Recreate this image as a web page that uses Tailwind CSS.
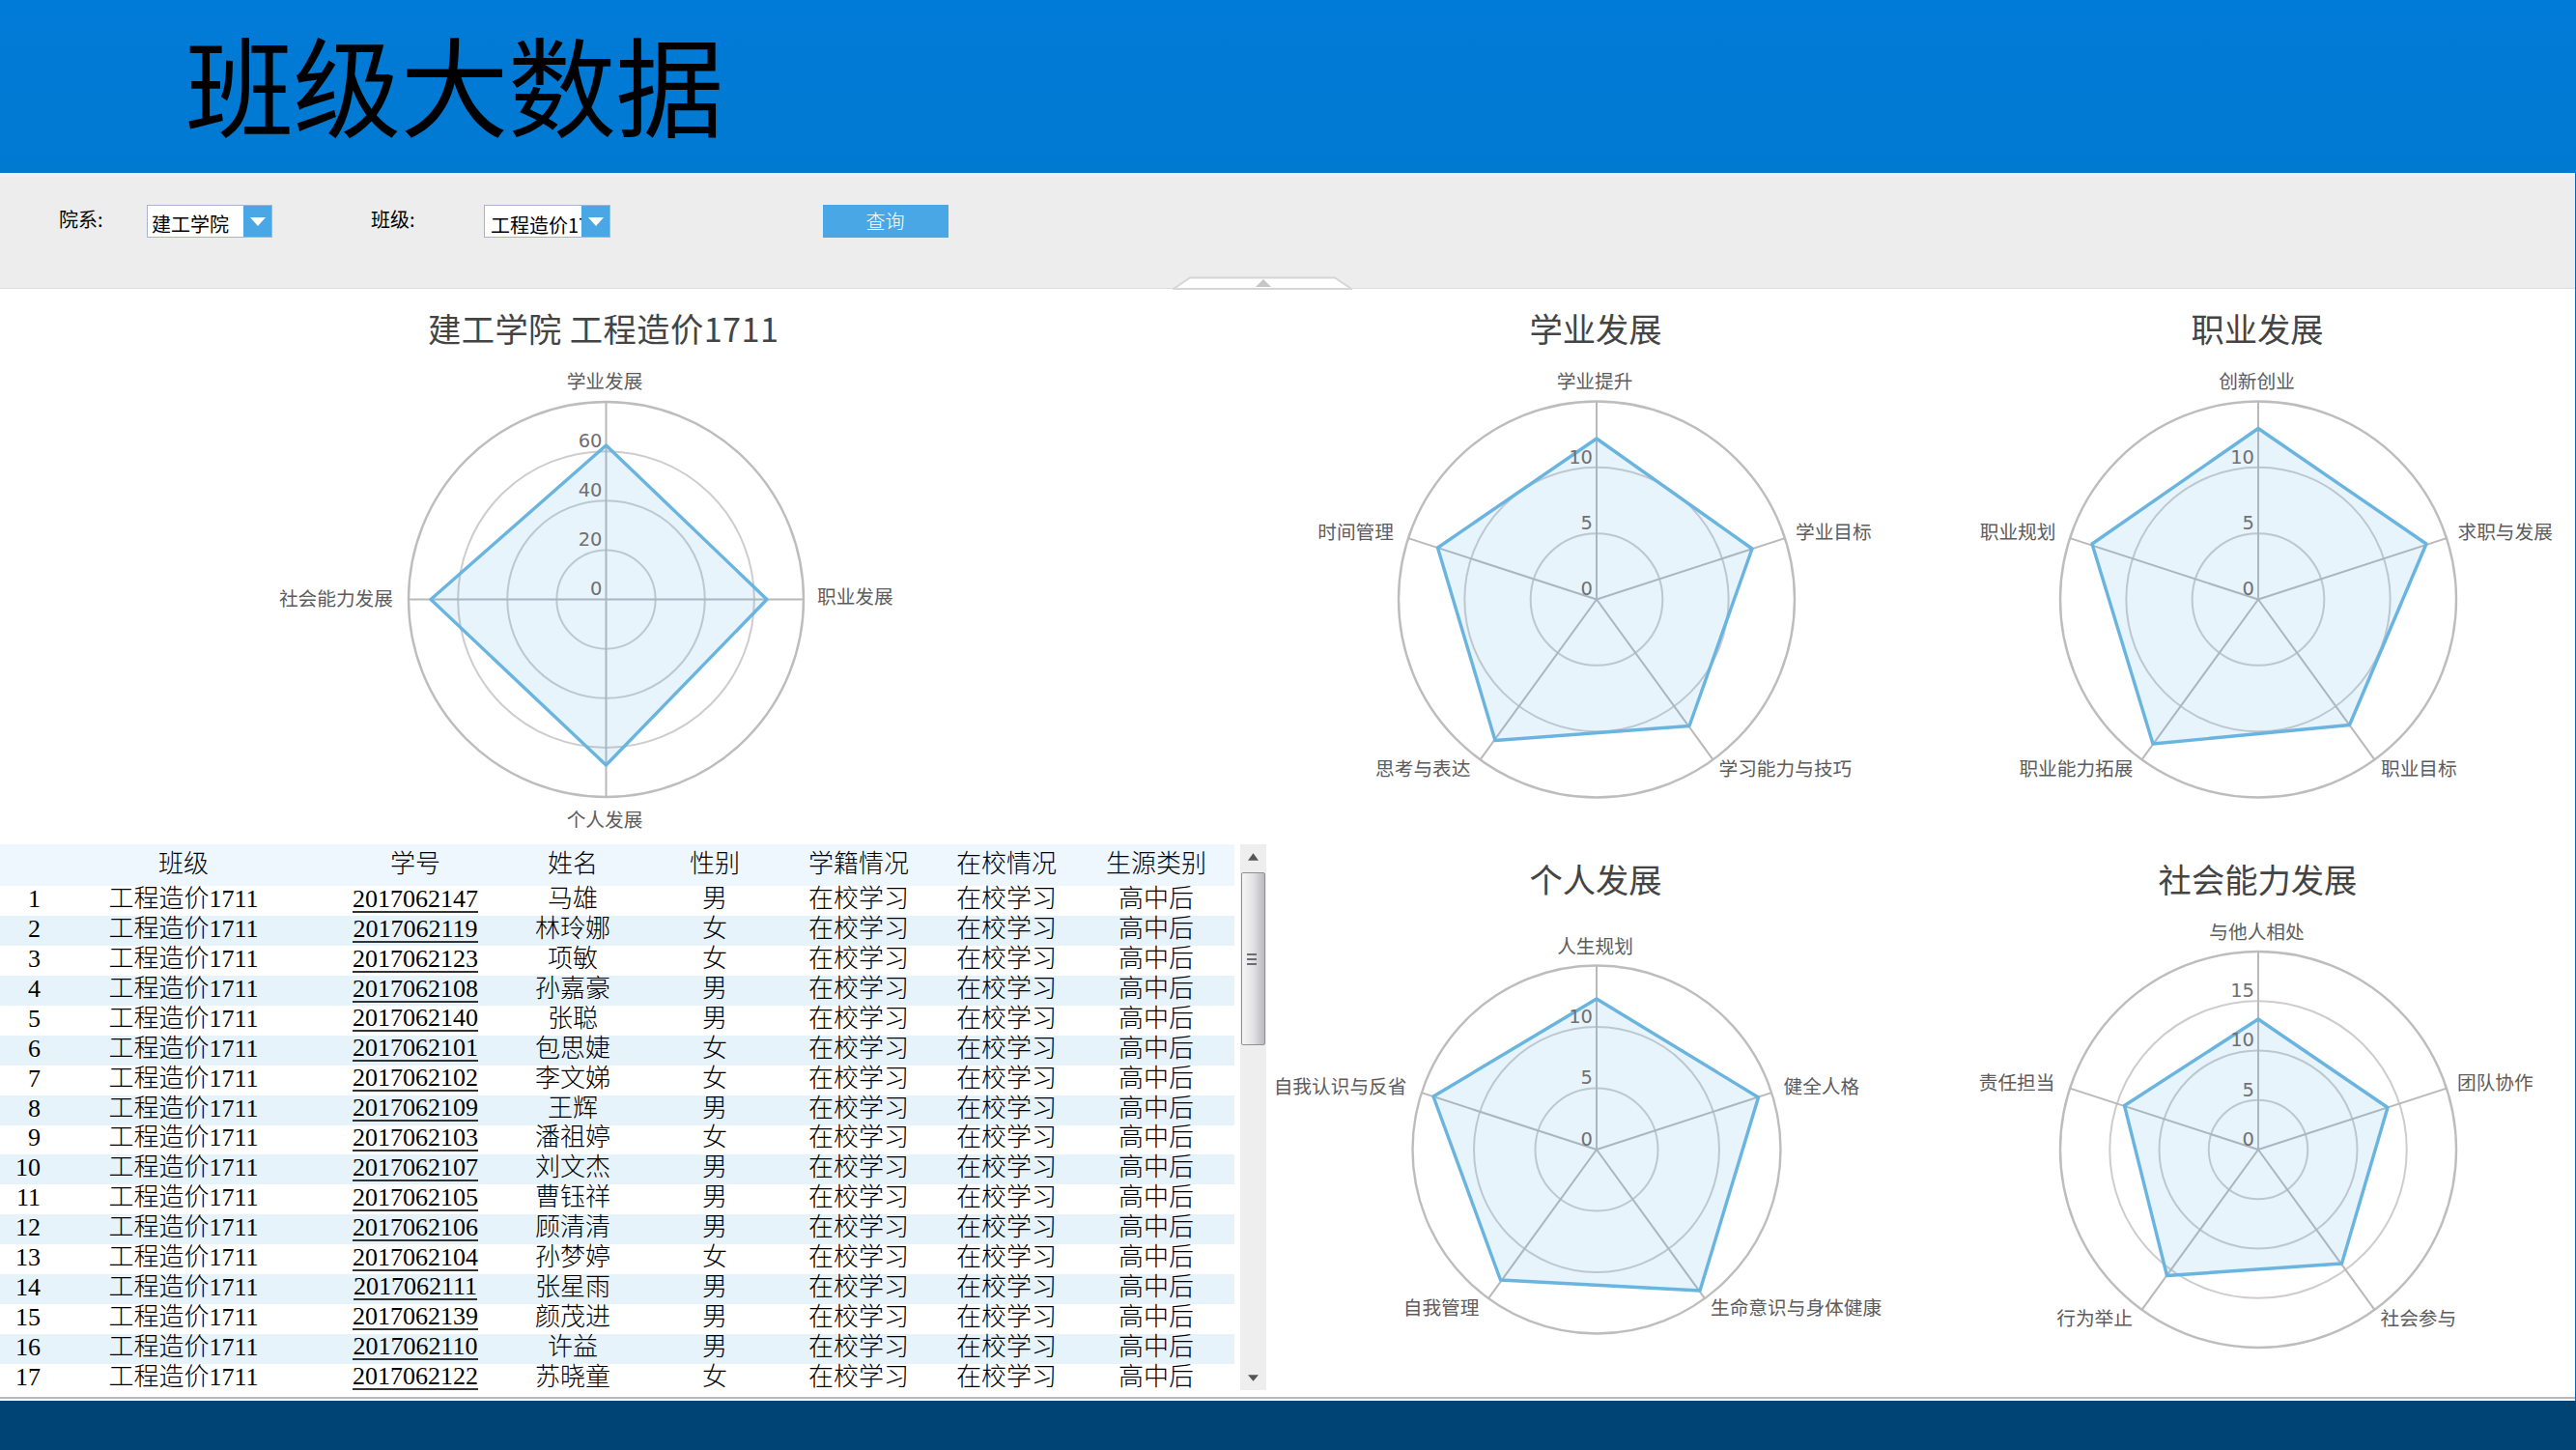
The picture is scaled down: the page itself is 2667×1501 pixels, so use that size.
<!DOCTYPE html>
<html lang="zh-CN">
<head>
  <meta charset="UTF-8" />
  <meta name="viewport" content="width=device-width, initial-scale=1.0" />
  <title>班级大数据</title>
  <script src="https://cdn.jsdelivr.net/npm/@tailwindcss/browser@4"></script>
</head>
<body class="w-[2667px] h-[1501px] overflow-hidden bg-[#004375] font-['Noto_Sans_CJK_SC',sans-serif]">
  <header class="h-[179px] pl-[192px] flex items-center bg-linear-to-b from-[#007bd7] to-[#0079d1]">
    <h1 class="pb-[10px] text-[112px] leading-none tracking-[-0.7px] text-black whitespace-nowrap">班级大数据</h1>
  </header>

  <div class="h-[1271px] bg-white border-r border-[#0067b5]">
    <!-- filter bar -->
    <div class="relative h-[120px] pt-[29px] pl-[61px] flex items-start bg-[#ededed] border-t-4 border-b border-t-[#f0f0f4] border-b-[#dcdcdc] text-[20px] leading-none text-black whitespace-nowrap">
      <span class="w-[91px] pt-[5px]">院系:</span>
      <div class="w-[130px] h-[34px] flex bg-white border border-[#a9b3d0]">
        <span class="w-[99px] pl-[4px] pt-[9px] overflow-hidden">建工学院</span>
        <span class="w-[29px] flex items-center justify-center bg-[#49a7e6]">
          <svg class="w-[16px] h-[9px]" viewBox="0 0 16 9"><path d="M0 0H16L8 9Z" fill="#fff" /></svg>
        </span>
      </div>
      <span class="w-[117px] ml-[102px] pt-[5px]">班级:</span>
      <div class="w-[131px] h-[34px] flex bg-white border border-[#a9b3d0]">
        <span class="w-[100px] pl-[6px] pt-[10px] overflow-hidden">工程造价1711</span>
        <span class="w-[29px] flex items-center justify-center bg-[#49a7e6]">
          <svg class="w-[16px] h-[9px]" viewBox="0 0 16 9"><path d="M0 0H16L8 9Z" fill="#fff" /></svg>
        </span>
      </div>
      <button class="w-[130px] h-[34px] ml-[219.5px] pb-[1px] bg-[#49a7e6] text-white font-light leading-none">查询</button>
      <svg class="absolute left-[1214px] bottom-[-2px] w-[186px] h-[14px]" viewBox="0 0 186 14">
        <path d="M1 13L18 1.5H168L185 13Z" fill="#fff" stroke="#d6d6d6" stroke-width="2" />
        <path d="M94 3L102 11H86Z" fill="#c6c6c6" />
      </svg>
    </div>

    <main class="h-[1147px] flex">
      <section class="w-[1311px] flex flex-col">
        <svg id="chart-class" class="w-[1311px] h-[575px] shrink-0" viewBox="0 299 1311 575"></svg>

        <div class="flex gap-[6px]">
          <div class="w-[1278px] font-['Liberation_Serif','Noto_Sans_CJK_SC',serif] text-[26px] font-light text-black whitespace-nowrap">
            <div class="h-[43.4px] pb-[1px] grid grid-cols-[62px_256px_224px_102px_192px_106px_200px_110px] items-center text-center leading-none bg-[#eff7fe]">
              <span></span>
              <span>班级</span>
              <span>学号</span>
              <span>姓名</span>
              <span>性别</span>
              <span>学籍情况</span>
              <span>在校情况</span>
              <span>生源类别</span>
            </div>
            <div id="students"></div>
          </div>

          <!-- scrollbar -->
          <div class="w-[27px] h-[565px] flex flex-col items-center bg-[#eeeeee]">
            <svg class="w-[11px] h-[8px] mt-[9px]" viewBox="0 0 12 8"><path d="M6 0L12 8H0Z" fill="#555" /></svg>
            <div class="w-[25px] h-[179px] mt-[12px] pr-[3px] flex flex-col items-center justify-center gap-[3px] border border-[#8f8f94] rounded-xs bg-linear-to-r from-[#f6f6f6] via-[#e2e2e4] to-[#b9b9bf]">
              <span class="w-[10px] h-[2px] bg-[#6c6c72]"></span>
              <span class="w-[10px] h-[2px] bg-[#6c6c72]"></span>
              <span class="w-[10px] h-[2px] bg-[#6c6c72]"></span>
            </div>
            <svg class="w-[11px] h-[7px] mt-auto mb-[9px]" viewBox="0 0 12 7"><path d="M0 0H12L6 7Z" fill="#555" /></svg>
          </div>
        </div>
      </section>

      <section class="grid grid-cols-[684px_671px] grid-rows-[571px_576px]">
        <svg id="chart-study" class="w-full h-full" viewBox="1311 299 684 571"></svg>
        <svg id="chart-career" class="w-full h-full" viewBox="1995 299 671 571"></svg>
        <svg id="chart-personal" class="w-full h-full" viewBox="1311 870 684 576"></svg>
        <svg id="chart-social" class="w-full h-full" viewBox="1995 870 671 576"></svg>
      </section>
    </main>
    <div class="h-[4px] border-t-2 border-[#bdb6b6] bg-[#f4f6f8]"></div>
  </div>

  <script>
    const charts = [
      {
        id: 'chart-class', title: '建工学院 工程造价1711', titleWidth: 363, tx: 624.5, ty: 341, cx: 627.5, cy: 620.5, r: 204.5, axes: 4,
        ticks: ['0', '20', '40', '60'],
        points: '627.5,461 794,620.5 627.5,792 446,620.5',
        labels: [['学业发展', 626, 394.5, 'middle'], ['职业发展', 846, 617.5, 'start'], ['个人发展', 626, 848.5, 'middle'], ['社会能力发展', 407, 619, 'end']],
      },
      {
        id: 'chart-study', title: '学业发展', tx: 1652, ty: 341, cx: 1653, cy: 620.5, r: 205, axes: 5,
        ticks: ['0', '5', '10'],
        points: '1653,454 1814,568 1749,751.5 1548,766.5 1488.5,567',
        labels: [['学业提升', 1651, 394.5, 'middle'], ['学业目标', 1859, 550.5, 'start'], ['学习能力与技巧', 1779.5, 795, 'start'], ['思考与表达', 1522.5, 795, 'end'], ['时间管理', 1443, 550.5, 'end']],
      },
      {
        id: 'chart-career', title: '职业发展', tx: 2337, ty: 341, cx: 2338, cy: 620.5, r: 205, axes: 5,
        ticks: ['0', '5', '10'],
        points: '2338,443.5 2512,563 2432.5,750.5 2229,770 2166,563',
        labels: [['创新创业', 2336.5, 394.5, 'middle'], ['求职与发展', 2544.5, 550.5, 'start'], ['职业目标', 2465, 795, 'start'], ['职业能力拓展', 2208.5, 795, 'end'], ['职业规划', 2128.5, 550.5, 'end']],
      },
      {
        id: 'chart-personal', title: '个人发展', tx: 1652, ty: 911, cx: 1653, cy: 1190, r: 190.5, axes: 5,
        ticks: ['0', '5', '10'],
        points: '1653,1034 1820.5,1136 1760,1336 1553.5,1325 1484,1135',
        labels: [['人生规划', 1651.5, 979, 'middle'], ['健全人格', 1846.5, 1124, 'start'], ['生命意识与身体健康', 1771, 1353.5, 'start'], ['自我管理', 1531.5, 1353.5, 'end'], ['自我认识与反省', 1456.5, 1124, 'end']],
      },
      {
        id: 'chart-social', title: '社会能力发展', tx: 2337.5, ty: 911, cx: 2338, cy: 1190, r: 205, axes: 5,
        ticks: ['0', '5', '10', '15'],
        points: '2338,1055 2472,1146.5 2424.5,1308 2243.5,1320.5 2199.5,1144.5',
        labels: [['与他人相处', 2336.5, 964.5, 'middle'], ['团队协作', 2544, 1120.5, 'start'], ['社会参与', 2464.5, 1364.5, 'start'], ['行为举止', 2208, 1364.5, 'end'], ['责任担当', 2127.5, 1120.5, 'end']],
      },
    ];

    charts.forEach(function (c) {
      const n = c.ticks.length;
      let html = '';

      // rings
      for (let i = 1; i <= n; i++) {
        const outer = i === n;
        html += `<circle cx="${c.cx}" cy="${c.cy}" r="${c.r * i / n}" fill="none" stroke="${outer ? '#bfbcbd' : '#d0cccd'}" stroke-width="${outer ? 2.4 : 2}" />`;
      }

      // spokes
      for (let i = 0; i < c.axes; i++) {
        const a = Math.PI * 2 * i / c.axes;
        html += `<line x1="${c.cx}" y1="${c.cy}" x2="${c.cx + c.r * Math.sin(a)}" y2="${c.cy - c.r * Math.cos(a)}" stroke="#bab8ba" stroke-width="2" />`;
      }

      html += `<polygon points="${c.points}" fill="#49a7e6" fill-opacity="0.13" stroke="#6ab4e0" stroke-width="3.4" stroke-linejoin="round" />`;

      c.ticks.forEach(function (t, i) {
        html += `<text class="font-['DejaVu_Sans',sans-serif]" x="${c.cx - 4}" y="${c.cy - c.r * i / n - 4.2}" font-size="19.5" fill="#707070" text-anchor="end">${t}</text>`;
      });
      c.labels.forEach(function (l) {
        html += `<text x="${l[1]}" y="${l[2] + 7.5}" font-size="19.7" fill="#5c5c5c" text-anchor="${l[3]}">${l[0]}</text>`;
      });
      const fit = c.titleWidth ? `textLength="${c.titleWidth}"` : '';
      html += `<text x="${c.tx}" y="${c.ty + 13}" font-size="34.3" fill="#444" text-anchor="middle" ${fit}>${c.title}</text>`;

      document.getElementById(c.id).innerHTML = html;
    });

    const students = [
      ['2017062147', '马雄', '男'],
      ['2017062119', '林玲娜', '女'],
      ['2017062123', '项敏', '女'],
      ['2017062108', '孙嘉豪', '男'],
      ['2017062140', '张聪', '男'],
      ['2017062101', '包思婕', '女'],
      ['2017062102', '李文娣', '女'],
      ['2017062109', '王辉', '男'],
      ['2017062103', '潘祖婷', '女'],
      ['2017062107', '刘文杰', '男'],
      ['2017062105', '曹钰祥', '男'],
      ['2017062106', '顾清清', '男'],
      ['2017062104', '孙梦婷', '女'],
      ['2017062111', '张星雨', '男'],
      ['2017062139', '颜茂进', '男'],
      ['2017062110', '许益', '男'],
      ['2017062122', '苏晓童', '女'],
    ];

    document.getElementById('students').innerHTML = students.map(function (s, i) {
      return `
        <div class="h-[30.9px] pb-[3px] grid grid-cols-[62px_256px_224px_102px_192px_106px_200px_110px] items-center text-center leading-[26px] even:bg-[#e7f3fa]">
          <span class="pr-[20px] text-right">${i + 1}</span>
          <span>工程造价1711</span>
          <span><a href="#" class="inline-block h-[27px] border-b-2 border-[#333]">${s[0]}</a></span>
          <span>${s[1]}</span>
          <span>${s[2]}</span>
          <span>在校学习</span>
          <span>在校学习</span>
          <span>高中后</span>
        </div>`;
    }).join('');
  </script>
</body>
</html>
